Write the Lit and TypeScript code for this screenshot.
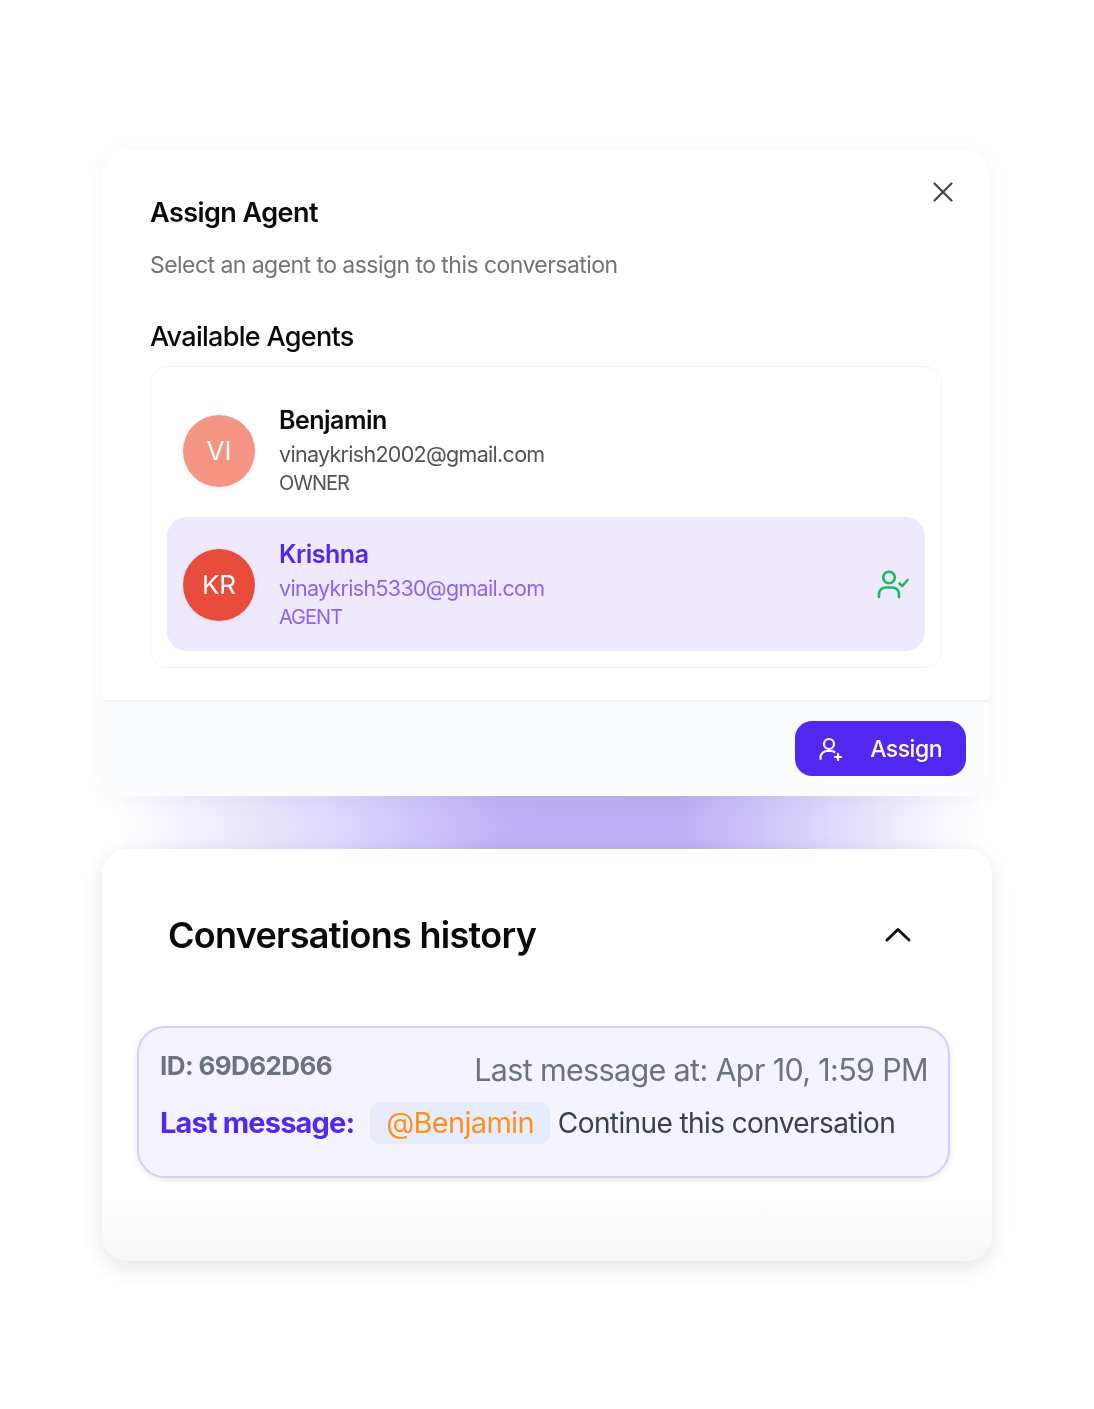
import { css, html, LitElement } from "lit";
import { customElement } from "lit/decorators.js";

interface Agent {
    initials: string;
    name: string;
    email: string;
    role: string;
    color: string;
    selected: boolean;
}

const AGENTS: Agent[] = [
    { initials: "VI", name: "Benjamin", email: "vinaykrish2002@gmail.com", role: "OWNER", color: "#f49583", selected: false },
    { initials: "KR", name: "Krishna", email: "vinaykrish5330@gmail.com", role: "AGENT", color: "#e84c3d", selected: true },
];

@customElement("app-root")
export class AppRoot extends LitElement {
    static override styles = css`
    :host {
      display: block;
      width: 1094px;
      height: 1409px;
      overflow: hidden;
      background: #fff;
      font-family: Inter, "Liberation Sans", sans-serif;
      color: #0a0a0a;
    }
    .page {
      padding: 149px 102px 0;
      display: flex;
      flex-direction: column;
      align-items: flex-start;
      /* the source is a slightly soft upscaled capture */
      filter: blur(0.4px);
    }
    .modal {
      position: relative;
      z-index: 1;
      width: 886px;
      height: 647px;
      margin-left: 1px;
      box-sizing: border-box;
      display: flex;
      flex-direction: column;
      background: #fff;
      border-radius: 26px;
      box-shadow: 0 4px 26px rgba(30, 30, 60, 0.05);
    }
    .modal-body {
      flex: 1;
      padding: 46px 47px 0;
    }
    .close {
      position: absolute;
      top: 33px;
      right: 36px;
      width: 20px;
      height: 20px;
      color: #444;
    }
    h2 {
      margin: 0;
      font-size: 27px;
      line-height: 36px;
      font-weight: 600;
      letter-spacing: -0.55px;
    }
    .sub {
      margin: 18px 0 0;
      font-size: 23px;
      line-height: 32px;
      color: #737373;
      letter-spacing: -0.55px;
    }
    h3 {
      margin: 38px 0 0;
      font-size: 27px;
      line-height: 36px;
      font-weight: 500;
      letter-spacing: -0.7px;
    }
    .list {
      margin-top: 11px;
      box-sizing: border-box;
      width: 792px;
      height: 302px;
      padding: 17px 16px;
      border: 1px solid #f5f5f5;
      border-radius: 18px;
    }
    .row {
      box-sizing: border-box;
      height: 134px;
      padding: 0 16px;
      display: flex;
      align-items: center;
      gap: 24px;
      border-radius: 20px;
    }
    .row.selected {
      margin-top: -1px;
      padding-top: 2px;
      background: #efe9fd;
    }
    .avatar {
      flex: none;
      box-sizing: border-box;
      width: 72px;
      height: 72px;
      padding-bottom: 2px;
      border-radius: 50%;
      display: flex;
      align-items: center;
      justify-content: center;
      color: #fff;
      font-size: 26px;
      box-shadow: 0 1px 4px rgba(0, 0, 0, 0.08);
    }
    .info {
      flex: 1;
      display: flex;
      flex-direction: column;
      padding-bottom: 4px;
    }
    .name {
      font-size: 25px;
      line-height: 32px;
      font-weight: 600;
      letter-spacing: -0.5px;
    }
    .email {
      font-size: 21.5px;
      line-height: 36px;
      color: #525252;
      letter-spacing: -0.7px;
    }
    .role {
      font-size: 20px;
      line-height: 22px;
      color: #525252;
      letter-spacing: -1px;
    }
    .selected .name {
      color: #5128f0;
    }
    .selected .email,
    .selected .role {
      color: #8b64f0;
    }
    .check {
      width: 32px;
      height: 32px;
      color: #16bb5c;
    }
    .modal-foot {
      height: 96px;
      box-sizing: border-box;
      padding: 19px 23px 0 0;
      display: flex;
      justify-content: flex-end;
      align-items: flex-start;
      background: #fbfcfe;
      border-top: 2px solid #f3f3f5;
      border-radius: 0 0 26px 26px;
    }
    .assign {
      box-sizing: border-box;
      width: 171px;
      height: 55px;
      padding: 0 24px;
      display: flex;
      align-items: center;
      justify-content: space-between;
      border: none;
      border-radius: 17px;
      background: #5128f0;
      color: #fff;
      font: 500 23px Inter, "Liberation Sans", sans-serif;
      letter-spacing: -0.5px;
    }
    .assign svg {
      width: 24px;
      height: 24px;
    }
    .glow {
      width: 890px;
      height: 53px;
      background: linear-gradient(90deg, #fff 2%, #f5f3fe 8.5%, #e0dafc 25%, #d0c6fb 35%, #c0b0f7 45%, #bfaff6 65%, #cfc5fa 74%, #e4defc 84%, #f8f7fe 94%, #fff 99%);
    }
    .history {
      position: relative;
      width: 890px;
      height: 412px;
      box-sizing: border-box;
      padding: 0 35px;
      background: linear-gradient(180deg, #fff 0%, #fff 84%, #f6f6f6 100%);
      border-radius: 26px;
      box-shadow: 0 6px 22px rgba(30, 30, 50, 0.12);
    }
    .history-head {
      height: 177px;
      padding: 0 44px 0 31px;
      display: flex;
      align-items: center;
      justify-content: space-between;
    }
    h1 {
      margin: 0;
      font-size: 36px;
      line-height: 46px;
      font-weight: 600;
      letter-spacing: -0.7px;
      transform: translateY(-3px);
    }
    .chev {
      width: 30px;
      height: 30px;
      color: #111;
      transform: translateY(-4px);
    }
    .convo {
      box-sizing: border-box;
      width: 813px;
      height: 152px;
      padding: 20px 20px 0 21px;
      display: flex;
      flex-direction: column;
      background: #f5f3ff;
      border: 2px solid #d5cef8;
      border-radius: 28px;
      box-shadow: 0 2px 6px rgba(60, 50, 120, 0.12);
    }
    .convo-top {
      display: flex;
      justify-content: space-between;
      align-items: flex-start;
    }
    .id {
      font-size: 26px;
      line-height: 36px;
      font-weight: 700;
      color: #6b7280;
      letter-spacing: -0.6px;
    }
    .when {
      margin-top: 3px;
      font-size: 30.5px;
      line-height: 38px;
      color: #6b7280;
      letter-spacing: -0.65px;
    }
    .convo-bottom {
      margin-top: 13px;
      display: flex;
      align-items: center;
      font-size: 29px;
      line-height: 42px;
    }
    .label {
      font-weight: 700;
      color: #5128f0;
      letter-spacing: -0.85px;
    }
    .mention {
      margin: 0 8px 0 16px;
      padding: 0 16px;
      border-radius: 10px;
      background: #e8ebfc;
      color: #f7931e;
      letter-spacing: -0.7px;
    }
    .text {
      font-size: 28px;
      color: #374151;
      letter-spacing: -0.6px;
    }
  `;

    private _renderAgent(a: Agent) {
        return html`
      <div class="row ${a.selected ? "selected" : ""}">
        <div class="avatar" style="background:${a.color}">${a.initials}</div>
        <div class="info">
          <span class="name">${a.name}</span>
          <span class="email">${a.email}</span>
          <span class="role">${a.role}</span>
        </div>
        ${a.selected
            ? html`<svg class="check" viewBox="0 0 32 32" fill="none" stroke="currentColor" stroke-width="2.6" stroke-linecap="round" stroke-linejoin="round">
              <circle cx="12" cy="8.5" r="5.8" />
              <path d="M2 28v-3a6.5 6.5 0 0 1 6.5-6.5h7a6.5 6.5 0 0 1 6.5 6.5v3" />
              <path d="M22.5 14.5l2.8 2.5 5.2-6" />
            </svg>`
            : null}
      </div>
    `;
    }

    override render() {
        return html`
      <div class="page">
        <section class="modal">
          <svg class="close" viewBox="0 0 20 20" fill="none" stroke="currentColor" stroke-width="2.2" stroke-linecap="round">
            <path d="M1.5 1.5l17 17M18.5 1.5l-17 17" />
          </svg>
          <div class="modal-body">
            <h2>Assign Agent</h2>
            <p class="sub">Select an agent to assign to this conversation</p>
            <h3>Available Agents</h3>
            <div class="list">${AGENTS.map((a) => this._renderAgent(a))}</div>
          </div>
          <div class="modal-foot">
            <button class="assign">
              <svg viewBox="0 0 24 24" fill="none" stroke="currentColor" stroke-width="2.2" stroke-linecap="round" stroke-linejoin="round">
                <circle cx="10" cy="7" r="5" />
                <path d="M1.5 22v-1.5a6.5 6.5 0 0 1 6.5-6.5h4a6.5 6.5 0 0 1 3.5 1" />
                <path d="M19 17v6M16 20h6" />
              </svg>
              <span>Assign</span>
            </button>
          </div>
        </section>
        <div class="glow"></div>
        <section class="history">
          <div class="history-head">
            <h1>Conversations history</h1>
            <svg class="chev" viewBox="0 0 30 30" fill="none" stroke="currentColor" stroke-width="3" stroke-linecap="round" stroke-linejoin="round">
              <path d="M4 21L15 10.5 26 21" />
            </svg>
          </div>
          <div class="convo">
            <div class="convo-top">
              <span class="id">ID: 69D62D66</span>
              <span class="when">Last message at: Apr 10, 1:59 PM</span>
            </div>
            <div class="convo-bottom">
              <span class="label">Last message:</span>
              <span class="mention">@Benjamin</span>
              <span class="text">Continue this conversation</span>
            </div>
          </div>
        </section>
      </div>
    `;
    }
}

declare global {
    interface HTMLElementTagNameMap {
        "app-root": AppRoot;
    }
}
